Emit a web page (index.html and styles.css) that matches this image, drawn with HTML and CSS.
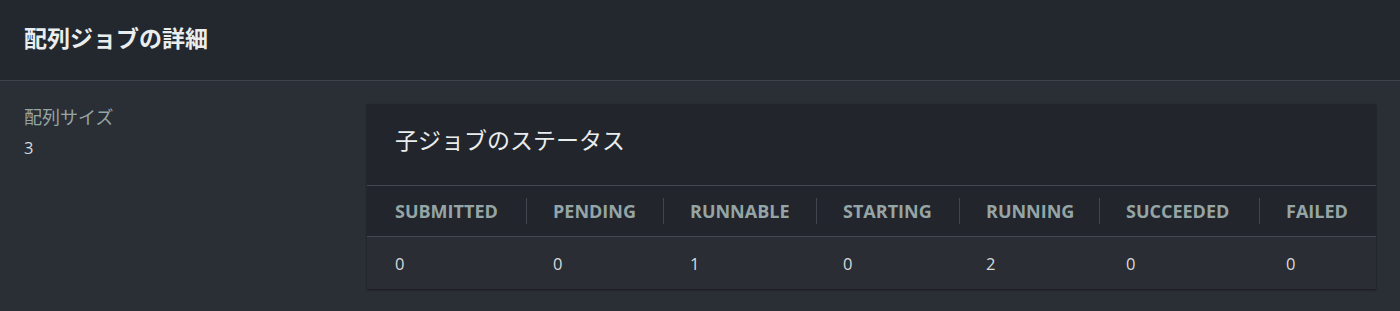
FILE: index.html
```html
<!DOCTYPE html>
<html lang="ja">
<head>
<meta charset="utf-8">
<link rel="stylesheet" href="styles.css">
</head>
<body>
<div class="panel">
  <div class="panel-header">
    <h2 class="panel-title">配列ジョブの詳細</h2>
  </div>
  <div class="panel-body">
    <div class="kv">
      <div class="kv-label">配列サイズ</div>
      <div class="kv-value">3</div>
    </div>
    <div class="card">
      <div class="card-header">
        <h3 class="card-title">子ジョブのステータス</h3>
      </div>
      <div class="status-grid">
        <div class="th"><span class="th-text">SUBMITTED</span></div>
        <div class="th"><span class="th-text">PENDING</span></div>
        <div class="th"><span class="th-text">RUNNABLE</span></div>
        <div class="th"><span class="th-text">STARTING</span></div>
        <div class="th"><span class="th-text">RUNNING</span></div>
        <div class="th"><span class="th-text">SUCCEEDED</span></div>
        <div class="th"><span class="th-text">FAILED</span></div>
        <div class="td">0</div>
        <div class="td">0</div>
        <div class="td">1</div>
        <div class="td">0</div>
        <div class="td">2</div>
        <div class="td">0</div>
        <div class="td">0</div>
      </div>
    </div>
  </div>
</div>
</body>
</html>
```

FILE: styles.css
```css
html, body {
  margin: 0;
  padding: 0;
  background: #2a2e35;
}
body {
  font-family: "Open Sans", "Noto Sans CJK JP", sans-serif;
  color: #d5dbdb;
  width: 1400px;
  height: 311px;
  overflow: hidden;
}
.panel-header {
  height: 80px;
  background: #23272e;
  border-bottom: 1px solid #3f444c;
  display: flex;
  align-items: center;
  padding: 0 24px;
}
.panel-title {
  margin: 0;
  font-family: "Noto Sans CJK JP", sans-serif;
  font-size: 23px;
  font-weight: 700;
  color: #eaeded;
  line-height: 30px;
  position: relative;
  top: -3px;
}
.panel-body {
  display: flex;
  padding: 23px 24px 0 24px;
}
.kv {
  width: 343px;
  padding-top: 1px;
}
.kv-label {
  font-family: "Noto Sans CJK JP", sans-serif;
  font-size: 18px;
  line-height: 22px;
  color: #95a5a6;
}
.kv-value {
  font-size: 16.5px;
  line-height: 22px;
  margin-top: 10px;
  color: #d5dbdb;
}
.card {
  width: 1009px;
  background: #22262c;
  box-shadow: 0 1px 2px rgba(0,0,0,0.45);
}
.card-header {
  height: 81px;
  display: flex;
  align-items: center;
  padding: 0 28px;
  border-bottom: 1px solid #414750;
}
.card-title {
  margin: 0;
  font-family: "Noto Sans CJK JP", sans-serif;
  font-weight: 400;
  font-size: 23px;
  line-height: 30px;
  color: #eaeded;
  position: relative;
  top: -6px;
}
.status-grid {
  display: grid;
  grid-template-columns: 159px 137px 153px 143px 140px 160px 1fr;
}
.th {
  height: 50px;
  display: flex;
  align-items: center;
  border-bottom: 1px solid #414750;
  position: relative;
  padding-left: 28px;
}
.th + .th {
  padding-left: 27px;
}
.th + .th::before {
  content: "";
  position: absolute;
  left: 0;
  top: 12px;
  height: 26px;
  width: 1px;
  background: #414750;
}
.th-text {
  font-size: 18px;
  font-weight: 700;
  color: #95a5a6;
}
.td {
  height: 52px;
  display: flex;
  align-items: center;
  padding-left: 28px;
  background: #2a2e34;
  font-size: 16.5px;
  color: #d5dbdb;
}
.td:nth-child(n+9) {
  padding-left: 27px;
}
```
